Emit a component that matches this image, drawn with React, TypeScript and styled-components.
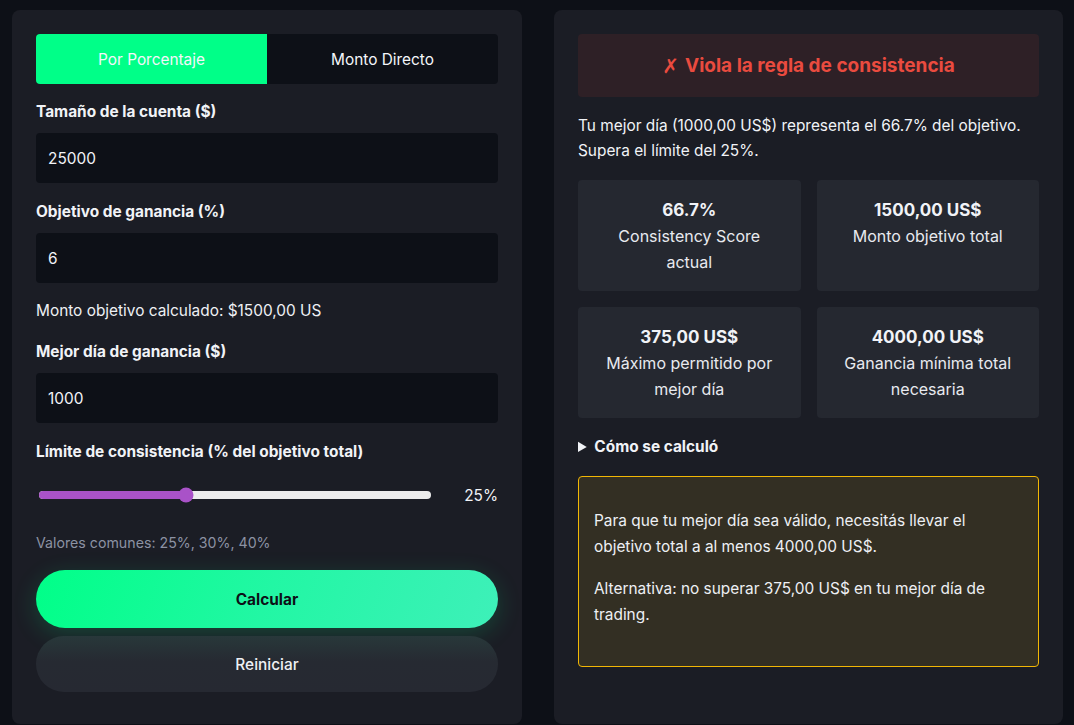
import { useState } from "react";
import styled, { createGlobalStyle } from "styled-components";

const GlobalStyle = createGlobalStyle`
  * { box-sizing: border-box; }
  body {
    margin: 0;
    background: #0d1017;
    font-family: Inter, "Noto Sans", sans-serif;
    font-size: 15.4px;
    color: #f1f3f7;
  }
`;

const Page = styled.main`
  display: grid;
  grid-template-columns: 510px 509px;
  gap: 32px;
  padding: 10px 11px 9px 12px;
  min-height: 725px;
`;

const Panel = styled.section`
  background: #1b1d25;
  border-radius: 8px;
  padding: 24px;
  display: flex;
  flex-direction: column;
`;

const Tabs = styled.div`
  display: grid;
  grid-template-columns: 1fr 1fr;
  height: 50px;
  border-radius: 4px;
  overflow: hidden;
  background: #0d1017;
  margin-bottom: 16px;
`;

const Tab = styled.button<{ $active?: boolean }>`
  border: 0;
  font: inherit;
  color: #f4f6fa;
  background: ${(p) => (p.$active ? "#00ff88" : "transparent")};
  cursor: pointer;
`;

const Field = styled.div`
  display: flex;
  flex-direction: column;
  gap: 9px;
  margin-bottom: 17px;
`;

const Label = styled.label`
  font-weight: 700;
  line-height: 24px;
  color: #f1f3f7;
`;

const Input = styled.input`
  height: 50px;
  border: 0;
  border-radius: 4px;
  background: #0d1017;
  color: #f1f3f7;
  font: inherit;
  padding: 0 12px;
  outline: none;
`;

const Note = styled.p<{ $muted?: boolean }>`
  margin: 0 0 ${(p) => (p.$muted ? "16px" : "18px")};
  font-size: ${(p) => (p.$muted ? "14.2px" : "15.4px")};
  line-height: 22px;
  color: ${(p) => (p.$muted ? "#8c92a3" : "#eef0f4")};
`;

const SliderRow = styled.div`
  display: flex;
  align-items: center;
  gap: 32px;
  height: 44px;
  margin: 9px 0 15px;
  padding-left: 3px;
`;

const Track = styled.div`
  position: relative;
  flex: 1;
  height: 8px;
  border-radius: 4px;
  background: #ececec;
`;

const Fill = styled.div`
  height: 100%;
  border-radius: 4px;
  background: #a952c8;
`;

const Thumb = styled.div`
  position: absolute;
  top: 50%;
  width: 15px;
  height: 15px;
  border-radius: 50%;
  background: #a952c8;
  transform: translate(-50%, -50%);
`;

const SliderValue = styled.span`
  width: 35px;
  text-align: right;
`;

const Button = styled.button<{ $primary?: boolean }>`
  height: ${(p) => (p.$primary ? "58px" : "56px")};
  border: 0;
  border-radius: 29px;
  font: inherit;
  font-weight: ${(p) => (p.$primary ? 700 : 500)};
  color: ${(p) => (p.$primary ? "#0d1017" : "#eef0f4")};
  background: ${(p) =>
    p.$primary
      ? "linear-gradient(110deg, #00ff88 0%, #22f7a4 50%, #3ef0b9 100%)"
      : "linear-gradient(180deg, #28383a 0%, #262a32 45%, #262932 100%)"};
  box-shadow: ${(p) =>
    p.$primary ? "0 6px 24px rgba(0, 255, 136, 0.18)" : "none"};
  margin-bottom: 8px;
  cursor: pointer;
`;

const Alert = styled.div`
  height: 63px;
  border-radius: 4px;
  background: #2e2026;
  color: #ea4b3f;
  font-size: 19px;
  font-weight: 700;
  display: flex;
  align-items: center;
  justify-content: center;
  gap: 6px;
  margin-bottom: 16px;
`;

const Cross = styled.span`
  font-family: "DejaVu Sans", sans-serif;
  font-weight: 400;
  font-size: 20px;
`;

const Summary = styled.p`
  margin: 0 0 17px;
  line-height: 25px;
`;

const StatGrid = styled.div`
  display: grid;
  grid-template-columns: 1fr 1fr;
  gap: 16px;
  margin-bottom: 18px;
`;

const Stat = styled.div`
  background: #252830;
  border-radius: 4px;
  padding: 18px 24px 14px;
  min-height: 111px;
  text-align: center;
`;

const StatValue = styled.div`
  font-size: 17px;
  font-weight: 700;
  line-height: 24px;
  margin-bottom: 1px;
`;

const StatLabel = styled.div`
  font-size: 16px;
  line-height: 26px;
  color: #e8eaef;
`;

const Details = styled.details`
  margin-bottom: 18px;

  summary {
    font-weight: 700;
    line-height: 22px;
    cursor: pointer;
  }
`;

const Warning = styled.div`
  border: 1px solid #f2b705;
  border-radius: 4px;
  background: #332f23;
  padding: 31px 15px 22px;
  min-height: 185px;
`;

const WarningText = styled.p`
  margin: 0 0 16px;
  line-height: 26px;
  color: #eef0f4;
`;

const stats = [
  { value: "66.7%", label: "Consistency Score actual" },
  { value: "1500,00 US$", label: "Monto objetivo total" },
  { value: "375,00 US$", label: "Máximo permitido por mejor día" },
  { value: "4000,00 US$", label: "Ganancia mínima total necesaria" },
];

export default function App() {
  const [mode, setMode] = useState<"pct" | "direct">("pct");
  const limit = 25;
  const pos = ((limit - 10) / 40) * 100;

  return (
    <>
      <GlobalStyle />
      <Page>
        <Panel>
          <Tabs>
            <Tab $active={mode === "pct"} onClick={() => setMode("pct")}>
              Por Porcentaje
            </Tab>
            <Tab $active={mode === "direct"} onClick={() => setMode("direct")}>
              Monto Directo
            </Tab>
          </Tabs>

          <Field>
            <Label>Tamaño de la cuenta ($)</Label>
            <Input defaultValue="25000" />
          </Field>
          <Field>
            <Label>Objetivo de ganancia (%)</Label>
            <Input defaultValue="6" />
          </Field>
          <Note>Monto objetivo calculado: $1500,00 US</Note>
          <Field>
            <Label>Mejor día de ganancia ($)</Label>
            <Input defaultValue="1000" />
          </Field>

          <Label>Límite de consistencia (% del objetivo total)</Label>
          <SliderRow>
            <Track>
              <Fill style={{ width: `${pos}%` }} />
              <Thumb style={{ left: `${pos}%` }} />
            </Track>
            <SliderValue>{limit}%</SliderValue>
          </SliderRow>
          <Note $muted>Valores comunes: 25%, 30%, 40%</Note>

          <Button $primary>Calcular</Button>
          <Button>Reiniciar</Button>
        </Panel>

        <Panel>
          <Alert>
            <Cross>✗</Cross>
            Viola la regla de consistencia
          </Alert>
          <Summary>
            Tu mejor día (1000,00 US$) representa el 66.7% del objetivo.
            <br />
            Supera el límite del 25%.
          </Summary>
          <StatGrid>
            {stats.map((s) => (
              <Stat key={s.value}>
                <StatValue>{s.value}</StatValue>
                <StatLabel>{s.label}</StatLabel>
              </Stat>
            ))}
          </StatGrid>
          <Details>
            <summary>Cómo se calculó</summary>
          </Details>
          <Warning>
            <WarningText>
              Para que tu mejor día sea válido, necesitás llevar el objetivo
              total a al menos 4000,00 US$.
            </WarningText>
            <WarningText>
              Alternativa: no superar 375,00 US$ en tu mejor día de trading.
            </WarningText>
          </Warning>
        </Panel>
      </Page>
    </>
  );
}
